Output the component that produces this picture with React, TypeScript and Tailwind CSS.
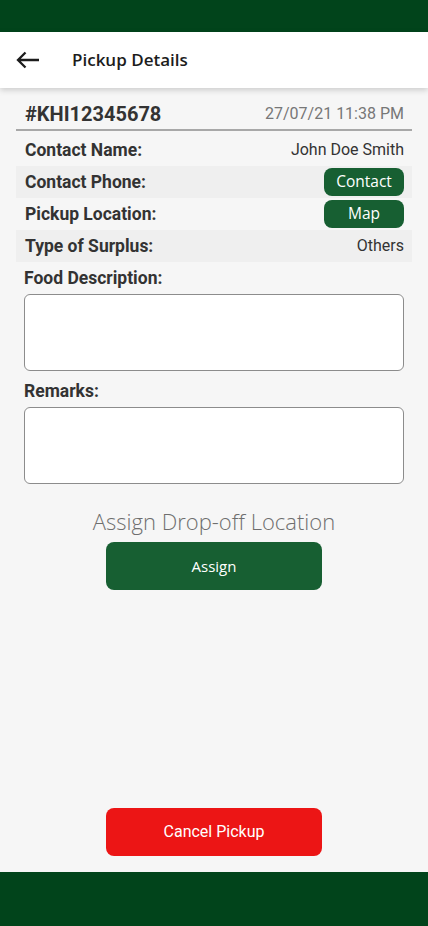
const roboto = { fontFamily: 'Roboto, "Liberation Sans", sans-serif' };

function InfoRow({ label, shaded, children }: { label: string; shaded?: boolean; children: React.ReactNode }) {
  return (
    <div className={`flex h-8 items-center justify-between pl-[9px] pr-2 ${shaded ? 'bg-[#efefef]' : ''}`}>
      <span className="text-[17.5px] font-bold text-[#333333]">{label}</span>
      {children}
    </div>
  );
}

function GreenPill({ label }: { label: string }) {
  return (
    <button className="flex h-7 w-20 items-center justify-center rounded-lg bg-[#175f32] font-['Open_Sans',sans-serif] text-[15.5px] text-white">
      {label}
    </button>
  );
}

function Field({ label }: { label: string }) {
  return (
    <div className="px-6">
      <div className="h-6 text-[17.5px] leading-6 font-bold text-[#333333]">{label}</div>
      <div className="mt-1 h-[77px] rounded-md border border-[#8c8c8c] bg-white" />
    </div>
  );
}

export default function App() {
  return (
    <div className="flex h-[926px] w-[428px] flex-col bg-[#f6f6f6]" style={roboto}>
      <div className="h-8 bg-[#01441b]" />
      <header className="relative z-10 flex h-14 items-center bg-white shadow-[0_2px_6px_rgba(0,0,0,0.18)]">
        <svg className="ml-4 h-6 w-6 text-[#1c1c1c]" viewBox="0 0 24 24" fill="none" stroke="currentColor" strokeWidth="2.3">
          <path d="M2 12H23M9.5 4.5L2 12L9.5 19.5" />
        </svg>
        <h1 className="ml-8 font-['Open_Sans',sans-serif] text-[17px] font-semibold text-[#1c1c1c]">Pickup Details</h1>
      </header>

      <div className="mx-4 mt-[10px] flex h-[33px] items-center justify-between border-b-2 border-[#a8a8a8] pl-[9px] pr-2">
        <span className="text-[20px] font-bold text-[#333333]">#KHI12345678</span>
        <span className="text-base text-[#777777]">27/07/21 11:38 PM</span>
      </div>

      <div className="mx-4 mt-[3px]">
        <InfoRow label="Contact Name:">
          <span className="text-base text-[#333333]">John Doe Smith</span>
        </InfoRow>
        <InfoRow label="Contact Phone:" shaded>
          <GreenPill label="Contact" />
        </InfoRow>
        <InfoRow label="Pickup Location:">
          <GreenPill label="Map" />
        </InfoRow>
        <InfoRow label="Type of Surplus:" shaded>
          <span className="text-base text-[#333333]">Others</span>
        </InfoRow>
      </div>

      <div className="mt-1 flex flex-col gap-2">
        <Field label="Food Description:" />
        <Field label="Remarks:" />
      </div>

      <div className="mt-[22px] text-center font-['Open_Sans',sans-serif] text-[22px] leading-[30px] font-light text-[#6e6e6e]">
        Assign Drop-off Location
      </div>
      <button className="mx-auto mt-[6px] h-12 w-[216px] rounded-lg bg-[#175f32] font-['Open_Sans',sans-serif] text-[15px] text-white">
        Assign
      </button>

      <div className="flex-1" />
      <button className="mx-auto mb-4 h-12 w-[216px] rounded-lg bg-[#ec1515] text-base text-white">Cancel Pickup</button>
      <div className="h-[54px] bg-[#01441b]" />
    </div>
  );
}
